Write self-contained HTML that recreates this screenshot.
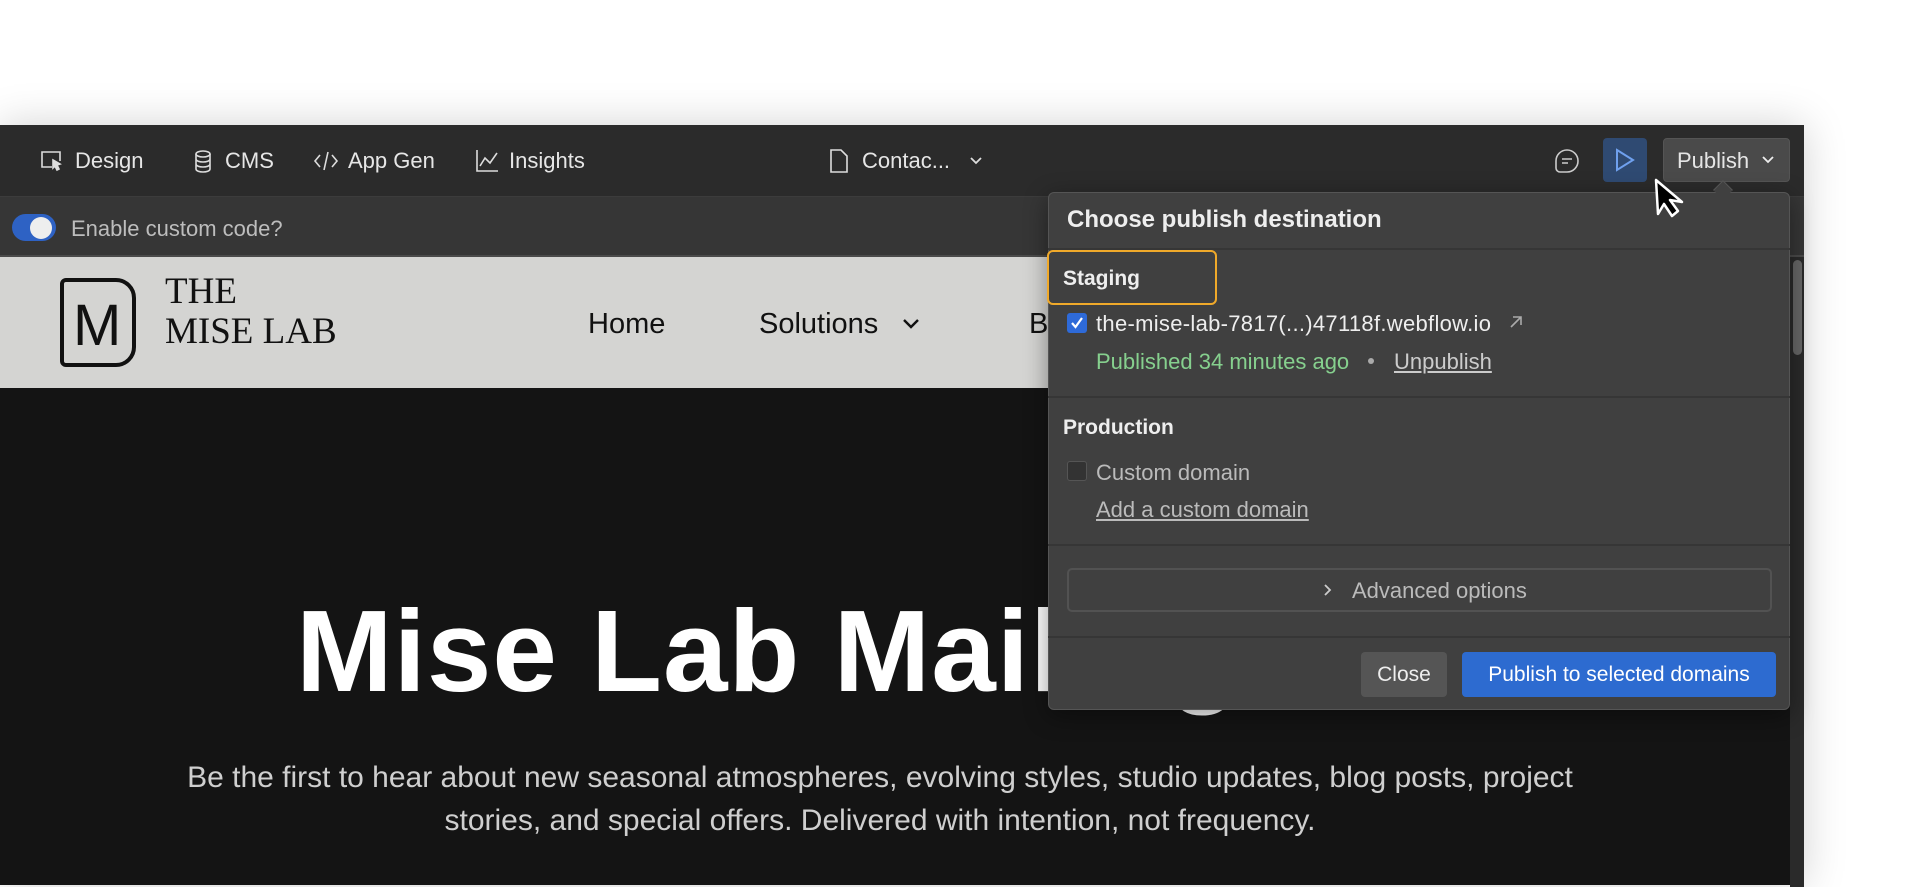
<!DOCTYPE html>
<html><head><meta charset="utf-8"><style>
*{box-sizing:border-box;margin:0;padding:0}
body{width:1920px;height:881px;background:#fff;position:relative;overflow:hidden;font-family:"Liberation Sans",sans-serif}
.a{position:absolute}
.win{left:0;top:125px;width:1804px;height:760px;background:#141414;box-shadow:0 0 40px rgba(0,0,0,.18);border-right:1px solid #444}
.tb{left:0;top:125px;width:1804px;height:72px;background:#2b2b2b;border-bottom:1px solid #3c3c3c}
.t{color:#e6e6e6;font-size:22px;top:148px}
.bar2{left:0;top:197px;width:1804px;height:60px;background:#363636;border-bottom:2px solid #4a4a4a}
.nav{left:0;top:257px;width:1790px;height:131px;background:#d4d4d2}
.pn{left:1048px;top:192px;width:742px;height:518px;background:#404040;border:1px solid #555;border-radius:6px;box-shadow:0 6px 24px rgba(0,0,0,.4)}
.sep{left:1048px;width:742px;height:2px;background:#363636}
.pt{color:#eee;font-size:22px}
.b{font-weight:bold}
</style></head><body>
<div class="a win"></div>
<div class="a tb"></div>
<svg class="a" style="left:40px;top:150px" width="24" height="22" viewBox="0 0 24 22" fill="none" stroke="#ddd" stroke-width="1.6"><path d="M12 17H2V2h18v9"/><path d="M13 10l7 4-3 1 2 4-2 1-2-4-2 2z" fill="#ddd"/></svg>
<div class="a t" style="left:75px">Design</div>
<svg class="a" style="left:193px;top:150px" width="20" height="23" viewBox="0 0 20 23" fill="none" stroke="#ddd" stroke-width="1.6"><ellipse cx="10" cy="4" rx="7" ry="3"/><path d="M3 4v15c0 4 14 4 14 0V4M3 9c0 4 14 4 14 0M3 14c0 4 14 4 14 0"/></svg>
<div class="a t" style="left:225px">CMS</div>
<svg class="a" style="left:313px;top:150px" width="26" height="22" viewBox="0 0 26 22" fill="none" stroke="#ddd" stroke-width="1.6"><path d="M7 5l-5 6 5 6M19 5l5 6-5 6M15 2l-4 18"/></svg>
<div class="a t" style="left:348px">App Gen</div>
<svg class="a" style="left:475px;top:149px" width="24" height="24" viewBox="0 0 24 24" fill="none" stroke="#ddd" stroke-width="1.6"><path d="M2 1v21h21M5 17l5-8 5 5 7-10"/></svg>
<div class="a t" style="left:509px">Insights</div>
<svg class="a" style="left:829px;top:149px" width="20" height="24" viewBox="0 0 20 24" fill="none" stroke="#ddd" stroke-width="1.6"><path d="M2 1h10l6 6v16H2z"/></svg>
<div class="a t" style="left:862px">Contac...</div>
<svg class="a" style="left:969px;top:156px" width="14" height="10" viewBox="0 0 14 10" fill="none" stroke="#ddd" stroke-width="1.8"><path d="M2 2l5 5 5-5"/></svg>
<svg class="a" style="left:1553px;top:147px" width="28" height="28" viewBox="0 0 28 28" fill="none" stroke="#ccc" stroke-width="1.6"><path d="M14 3a11 11 0 0 1 0 22H7a4 4 0 0 1-4-4v-7A11 11 0 0 1 14 3z"/><path d="M9 12h10M9 16h6"/></svg>
<div class="a" style="left:1603px;top:138px;width:44px;height:44px;background:#2f4a72;border-radius:4px"></div>
<svg class="a" style="left:1614px;top:148px" width="22" height="24" viewBox="0 0 22 24" fill="none" stroke="#6fa0ee" stroke-width="2"><path d="M3 2l16 10L3 22z"/></svg>
<div class="a" style="left:1663px;top:138px;width:127px;height:44px;background:#4a4a4a;border-radius:4px;border:1px solid #555"></div>
<div class="a t" style="left:1677px;top:148px">Publish</div>
<svg class="a" style="left:1761px;top:155px" width="14" height="10" viewBox="0 0 14 10" fill="none" stroke="#eee" stroke-width="1.8"><path d="M2 2l5 5 5-5"/></svg>
<div class="a bar2"></div>
<div class="a" style="left:12px;top:214px;width:44px;height:27px;background:#2e62c4;border-radius:14px"></div>
<div class="a" style="left:30px;top:217px;width:22px;height:22px;background:#eee;border-radius:50%"></div>
<div class="a" style="left:71px;top:216px;color:#bdbdbd;font-size:22px">Enable custom code?</div>
<div class="a nav"></div>
<div class="a" style="left:60px;top:278px;width:76px;height:89px;border:4px solid #111;border-radius:6px 20px 20px 6px"></div>
<div class="a" style="left:73px;top:292px;font-family:'Liberation Sans';font-size:58px;color:#111">M</div>
<div class="a" style="left:165px;top:272px;font-family:'Liberation Serif',serif;font-size:37px;line-height:40px;color:#111">THE<br>MISE LAB</div>
<div class="a" style="left:588px;top:308px;font-size:29px;color:#111">Home</div>
<div class="a" style="left:759px;top:308px;font-size:29px;color:#111">Solutions</div>
<svg class="a" style="left:902px;top:318px" width="18" height="12" viewBox="0 0 18 12" fill="none" stroke="#111" stroke-width="2.4"><path d="M2 2l7 7 7-7"/></svg>
<div class="a" style="left:1029px;top:308px;font-size:29px;color:#111">B</div>
<div class="a" style="left:296px;top:584px;font-size:116px;font-weight:bold;color:#fff;letter-spacing:1px;white-space:nowrap">Mise Lab Mailing</div>
<div class="a" style="left:0;top:756px;width:1760px;text-align:center;font-size:30px;line-height:43px;color:#cfcfcf">Be the first to hear about new seasonal atmospheres, evolving styles, studio updates, blog posts, project<br>stories, and special offers. Delivered with intention, not frequency.</div>
<div class="a" style="left:1790px;top:257px;width:14px;height:630px;background:#2a2a2a"></div>
<div class="a" style="left:1793px;top:260px;width:9px;height:95px;background:#666;border-radius:5px"></div>
<div class="a pn"></div>
<div class="a" style="left:1716px;top:183px;width:14px;height:14px;background:#404040;transform:rotate(45deg);border-left:1px solid #555;border-top:1px solid #555"></div>
<div class="a pt b" style="left:1067px;top:206px;font-size:24px">Choose publish destination</div>
<div class="a sep" style="top:248px"></div>
<div class="a" style="left:1047px;top:250px;width:170px;height:55px;border:2px solid #f0a92a;border-radius:6px"></div>
<div class="a pt b" style="left:1063px;top:267px;font-size:21px">Staging</div>
<div class="a" style="left:1067px;top:313px;width:20px;height:20px;background:#2e6ad8;border-radius:3px"></div>
<svg class="a" style="left:1069px;top:315px" width="16" height="16" viewBox="0 0 16 16" fill="none" stroke="#fff" stroke-width="2.2"><path d="M3 8l3.5 4L13 3"/></svg>
<div class="a pt" style="left:1096px;top:311px;letter-spacing:0.3px">the-mise-lab-7817(...)47118f.webflow.io</div>
<svg class="a" style="left:1508px;top:314px" width="16" height="16" viewBox="0 0 16 16" fill="none" stroke="#aaa" stroke-width="1.6"><path d="M3 13L13 3M5 3h8v8"/></svg>
<div class="a" style="left:1096px;top:349px;font-size:22px;color:#86d08e">Published 34 minutes ago</div>
<div class="a" style="left:1368px;top:358px;width:6px;height:6px;border-radius:50%;background:#aaa"></div>
<div class="a" style="left:1394px;top:349px;font-size:22px;color:#ccc;text-decoration:underline">Unpublish</div>
<div class="a sep" style="top:396px"></div>
<div class="a pt b" style="left:1063px;top:416px;font-size:21px">Production</div>
<div class="a" style="left:1067px;top:461px;width:20px;height:20px;background:#333;border:1px solid #555;border-radius:3px"></div>
<div class="a" style="left:1096px;top:460px;font-size:22px;color:#bbb">Custom domain</div>
<div class="a" style="left:1096px;top:497px;font-size:22px;color:#bbb;text-decoration:underline">Add a custom domain</div>
<div class="a sep" style="top:544px"></div>
<div class="a" style="left:1067px;top:568px;width:705px;height:44px;border:2px solid #525252;border-radius:5px"></div>
<svg class="a" style="left:1323px;top:583px" width="10" height="14" viewBox="0 0 10 14" fill="none" stroke="#ccc" stroke-width="1.8"><path d="M2 2l5 5-5 5"/></svg>
<div class="a" style="left:1352px;top:578px;font-size:22px;color:#bbb">Advanced options</div>
<div class="a sep" style="top:636px"></div>
<div class="a" style="left:1361px;top:652px;width:86px;height:45px;background:#555;border-radius:4px;color:#eee;font-size:21px;text-align:center;line-height:45px">Close</div>
<div class="a" style="left:1462px;top:652px;width:314px;height:45px;background:#2d6bd0;border-radius:4px;color:#fff;font-size:21px;text-align:center;line-height:45px">Publish to selected domains</div>
<svg class="a" style="left:1652px;top:178px" width="34" height="44" viewBox="0 0 34 44"><path d="M30 2L28 36l-6-10-8 12-6-5 8-11L4 24z" fill="#000" stroke="#fff" stroke-width="2.5" stroke-linejoin="round" transform="scale(-1,1) translate(-34,0)"/></svg>
</body></html>
